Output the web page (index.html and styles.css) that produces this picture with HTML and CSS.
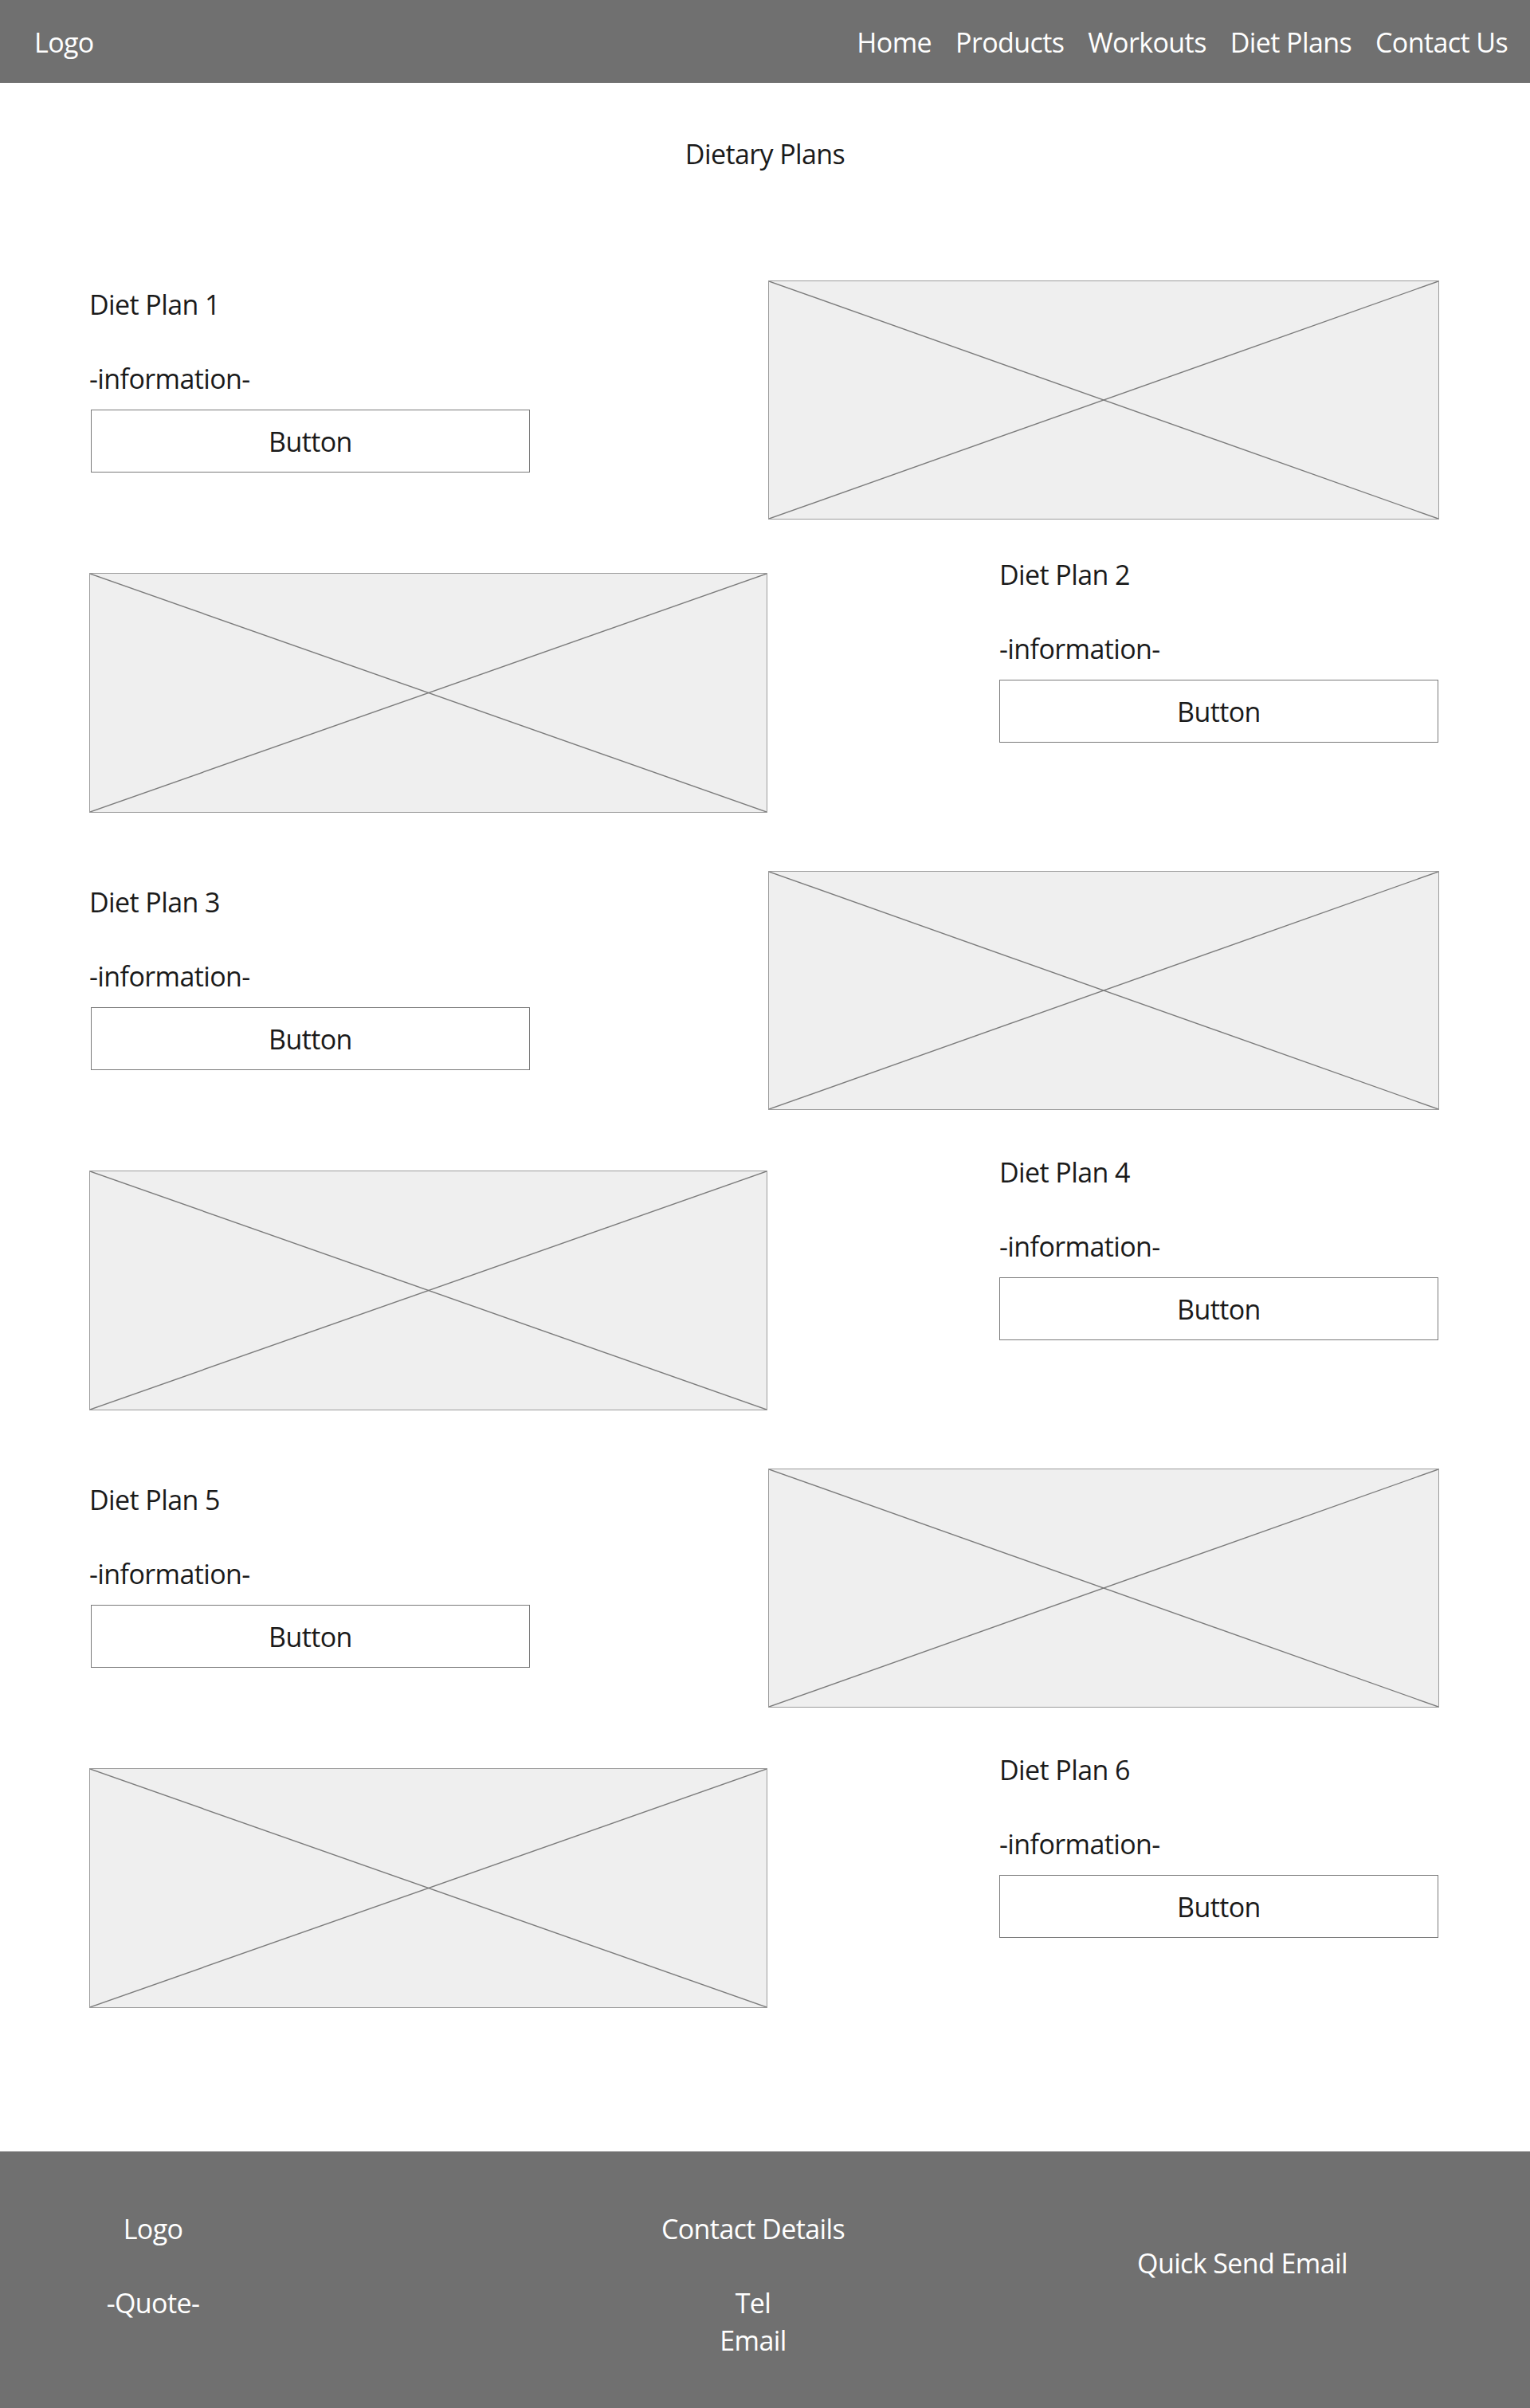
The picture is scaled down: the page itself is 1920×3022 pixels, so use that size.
FILE: index.html
```html
<!DOCTYPE html>
<html lang="en">
<head>
    <meta charset="UTF-8">
    <meta name="viewport" content="width=device-width, initial-scale=1.0">
    <title>Dietary Plans</title>
    <link rel="stylesheet" href="styles.css">
</head>
<body>
    <header class="header">
        <div class="logo">Logo</div>
        <nav class="nav">
            <a class="nav-link" href="#">Home</a>
            <a class="nav-link" href="#">Products</a>
            <a class="nav-link" href="#">Workouts</a>
            <a class="nav-link" href="#">Diet Plans</a>
            <a class="nav-link" href="#">Contact Us</a>
        </nav>
    </header>

    <main class="main">
        <h1 class="page-title">Dietary Plans</h1>

        <div class="plans">
            <section class="plan plan-a">
                <div class="plan-text">
                    <h2 class="plan-title">Diet Plan 1</h2>
                    <p class="plan-info">-information-</p>
                    <button class="btn">Button</button>
                </div>
                <div class="placeholder">
                    <svg viewBox="0 0 100 100" preserveAspectRatio="none"><line x1="0" y1="0" x2="100" y2="100"/><line x1="100" y1="0" x2="0" y2="100"/></svg>
                </div>
            </section>

            <section class="plan plan-b first-b">
                <div class="placeholder">
                    <svg viewBox="0 0 100 100" preserveAspectRatio="none"><line x1="0" y1="0" x2="100" y2="100"/><line x1="100" y1="0" x2="0" y2="100"/></svg>
                </div>
                <div class="plan-text">
                    <h2 class="plan-title">Diet Plan 2</h2>
                    <p class="plan-info">-information-</p>
                    <button class="btn">Button</button>
                </div>
            </section>

            <section class="plan plan-a">
                <div class="plan-text">
                    <h2 class="plan-title">Diet Plan 3</h2>
                    <p class="plan-info">-information-</p>
                    <button class="btn">Button</button>
                </div>
                <div class="placeholder">
                    <svg viewBox="0 0 100 100" preserveAspectRatio="none"><line x1="0" y1="0" x2="100" y2="100"/><line x1="100" y1="0" x2="0" y2="100"/></svg>
                </div>
            </section>

            <section class="plan plan-b">
                <div class="placeholder">
                    <svg viewBox="0 0 100 100" preserveAspectRatio="none"><line x1="0" y1="0" x2="100" y2="100"/><line x1="100" y1="0" x2="0" y2="100"/></svg>
                </div>
                <div class="plan-text">
                    <h2 class="plan-title">Diet Plan 4</h2>
                    <p class="plan-info">-information-</p>
                    <button class="btn">Button</button>
                </div>
            </section>

            <section class="plan plan-a">
                <div class="plan-text">
                    <h2 class="plan-title">Diet Plan 5</h2>
                    <p class="plan-info">-information-</p>
                    <button class="btn">Button</button>
                </div>
                <div class="placeholder">
                    <svg viewBox="0 0 100 100" preserveAspectRatio="none"><line x1="0" y1="0" x2="100" y2="100"/><line x1="100" y1="0" x2="0" y2="100"/></svg>
                </div>
            </section>

            <section class="plan plan-b">
                <div class="placeholder">
                    <svg viewBox="0 0 100 100" preserveAspectRatio="none"><line x1="0" y1="0" x2="100" y2="100"/><line x1="100" y1="0" x2="0" y2="100"/></svg>
                </div>
                <div class="plan-text">
                    <h2 class="plan-title">Diet Plan 6</h2>
                    <p class="plan-info">-information-</p>
                    <button class="btn">Button</button>
                </div>
            </section>
        </div>
    </main>

    <footer class="footer">
        <div class="footer-col footer-brand">
            <p>Logo</p>
            <p class="gap-line">-Quote-</p>
        </div>
        <div class="footer-col footer-contact">
            <p>Contact Details</p>
            <p class="gap-line">Tel</p>
            <p>Email</p>
        </div>
        <div class="footer-col footer-send">
            <p>Quick Send Email</p>
        </div>
    </footer>
</body>
</html>
```

FILE: styles.css
```css
/* wireframe: diet plans page */
* { box-sizing: border-box; }
body {
    margin: 0;
    font-family: "Open Sans", "Noto Sans", sans-serif;
    font-size: 34px;
    letter-spacing: -0.6px;
    line-height: 46.67px;
    color: #1a1a1a;
    background: #fff;
}
p, h1, h2 { margin: 0; font-size: inherit; font-weight: normal; }

.header {
    display: flex;
    justify-content: space-between;
    align-items: center;
    height: 104px;
    padding: 2px 28px 0 43px;
    background: #707070;
    color: #fff;
}
.nav { display: flex; gap: 30px; }
.nav-link { color: #fff; text-decoration: none; }

.main { padding-top: 66px; }
.page-title { text-align: center; }

.plans { padding: 0 114px 0 112px; margin-top: 135px; }
.plan {
    display: flex;
    justify-content: space-between;
    align-items: flex-start;
}
.plan-a + .plan-b { margin-top: 55px; }
.plan-a + .first-b { margin-top: 46px; }
.plan-b + .plan-a { margin-top: 73px; }

.plan-text { width: 552px; }
.plan-a .plan-text { margin-top: 7px; }
.plan-b + .plan-a .plan-text { margin-top: 16px; }
.plan-b .placeholder { margin-top: 21px; width: 851px; height: 301px; }
.plan-info { margin-top: 46.67px; }

.btn {
    display: flex;
    align-items: center;
    justify-content: center;
    width: 551px;
    height: 79px;
    margin-top: 15px;
    padding: 3px 0 0;
    border: 1.5px solid #7a7a7a;
    background: #fff;
    font: inherit;
    letter-spacing: inherit;
    color: #1a1a1a;
    cursor: pointer;
}
.plan-a .btn { margin-left: 2px; }

.placeholder {
    width: 842px;
    height: 300px;
    border: 1.5px solid #9c9c9c;
    background: #efefef;
}
.placeholder svg { display: block; width: 100%; height: 100%; }
.placeholder line { stroke: #7b7b7b; stroke-width: 1.4; vector-effect: non-scaling-stroke; }

.footer {
    display: flex;
    align-items: flex-start;
    height: 324px;
    margin-top: 180px;
    padding-top: 74px;
    background: #707070;
    color: #fff;
    text-align: center;
}
.footer-brand { width: 384px; }
.footer-contact { width: 480px; margin-left: 321px; }
.footer-send { width: 440px; margin-left: 154px; margin-top: 43px; }
.gap-line { margin-top: 46.67px; }
```
